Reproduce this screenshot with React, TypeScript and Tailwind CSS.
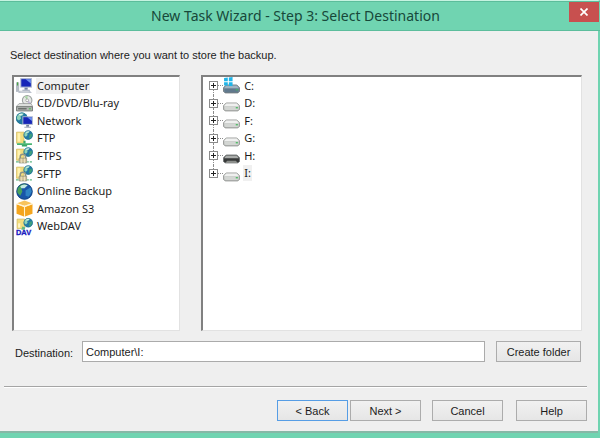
import { useState } from "react";
import type { ReactNode } from "react";

const ICON = "block h-[17px] w-[17px] shrink-0";

function Globe({ x, y, r }: { x: number; y: number; r: number }) {
  const k = r / 8;
  return (
    <g transform={`translate(${x} ${y}) scale(${k})`}>
      <circle r="8" fill="#2379a6" />
      <path d="M-7 -3C-5 -7 0 -8 3 -7L1 -4L-2 -3L-1 0L-4 3L-7 1Z" fill="#8fd3b8" />
      <path d="M2 -1L6 -3L7 1L4 6L1 5L2 2Z" fill="#3f9f7c" />
      <path d="M-5 -5C-3 -7 1 -7 2 -6L-2 -4Z" fill="#dff4f4" />
      <circle r="7.5" fill="none" stroke="#23788c" strokeWidth="1" />
    </g>
  );
}

function Monitor({ x, y }: { x: number; y: number }) {
  return (
    <g transform={`translate(${x} ${y})`}>
      <path d="M0 0H11V9H0Z" fill="#a9b4cf" />
      <path d="M1 1H10V8H1Z" fill="#1726b8" />
      <path d="M5 1H10V5Z" fill="#6f93ef" />
      <path d="M4 9H7V11H4Z" fill="#7480a0" />
      <path d="M2 11H9V12H2Z" fill="#9aa3b8" />
    </g>
  );
}

function ComputerIcon() {
  return (
    <svg viewBox="0 0 16 16" className={ICON} aria-hidden="true">
      <path d="M0 5H3V14H0Z" fill="#b5bcc5" />
      <path d="M1 5H2V8H1Z" fill="#44a53c" />
      <Monitor x={4} y={1} />
      <path d="M3 13H13L15 15H2Z" fill="#bcc2cc" />
      <path d="M4 14H12" stroke="#e2e6ec" strokeWidth="0.7" />
    </svg>
  );
}

function DiscIcon() {
  return (
    <svg viewBox="0 0 16 16" className={ICON} aria-hidden="true">
      <circle cx="10.500" cy="5" r="4.500" fill="#e5e8e5" stroke="#9da2a0" />
      <path d="M10.500 5L8 1.500L11 1Z" fill="#a9d6a4" />
      <path d="M10.500 5L14 7L12 9Z" fill="#c5b9dc" />
      <circle cx="10.500" cy="5" r="1.300" fill="#fff" stroke="#888" strokeWidth="0.6" />
      <path d="M3 8H14L16 11H0Z" fill="#dcdedc" stroke="#8c908d" strokeWidth="0.6" />
      <path d="M0.500 11H15.500V15H0.500Z" fill="#b3b7b4" stroke="#6d716e" strokeWidth="0.8" />
      <path d="M2 13H10" stroke="#505451" />
      <path d="M12 13H14" stroke="#45b84a" />
    </svg>
  );
}

function NetworkIcon() {
  return (
    <svg viewBox="0 0 16 16" className={ICON} aria-hidden="true">
      <Globe x={5.5} y={6} r={5.5} />
      <g transform="translate(6 4) scale(0.9)">
        <Monitor x={0} y={0} />
      </g>
    </svg>
  );
}

function FolderGlobe({ children }: { children: ReactNode }) {
  return (
    <svg viewBox="0 0 16 16" className={ICON} aria-hidden="true">
      <path d="M0.500 2H7.500V12.500H0.500Z" fill="#f3dd7d" stroke="#d3ba62" strokeWidth="0.7" />
      <path d="M1.500 3H4V11H1.500Z" fill="#fff2b0" />
      <Globe x={11.5} y={4.8} r={4.3} />
      {children}
    </svg>
  );
}

function FtpIcon() {
  return (
    <FolderGlobe>
      <path d="M7 10H9V12.500H15V14H10.500V15.500H5.500V14H1V12.500H7Z" fill="#39a966" />
      <path d="M1 13H15" stroke="#8fe0a8" strokeWidth="0.5" />
    </FolderGlobe>
  );
}

function SecureFtpIcon() {
  return (
    <FolderGlobe>
      <path d="M4 11V9C4 6 9 6 9 9V11" fill="none" stroke="#8b9389" strokeWidth="1.400" />
      <path d="M3 10.500H10V15H3Z" fill="#d3c39a" stroke="#8a8e7a" strokeWidth="0.7" />
      <path d="M5 11V15M8 11V15" stroke="#efe6c4" strokeWidth="0.8" />
      <path d="M0 14H2.500M10.500 14H12M13 14H15" stroke="#5fb884" strokeWidth="1.400" />
    </FolderGlobe>
  );
}

function OnlineIcon() {
  return (
    <svg viewBox="0 0 16 16" className={ICON} aria-hidden="true">
      <circle cx="8" cy="8" r="7.500" fill="#1955a8" />
      <path d="M1 6C2 2 6 0 10 1L8 4L5 5L6 8L4 12L1 9Z" fill="#4aa35d" />
      <path d="M9 7L14 4L15 8L12 13L9 12Z" fill="#2f83c4" />
      <path d="M4 3C6 1 9 1 11 2L8 5L5 5Z" fill="#c3e9e2" />
      <circle cx="8" cy="8" r="7.300" fill="none" stroke="#174480" strokeWidth="0.8" />
    </svg>
  );
}

function AmazonIcon() {
  return (
    <svg viewBox="0 0 16 16" className={ICON} aria-hidden="true">
      <path d="M1 3L8 0.500L15 3L8 5.500Z" fill="#f8c35c" />
      <path d="M0.500 4L7.500 6.500V15.500L0.500 13Z" fill="#f4a51d" />
      <path d="M8.500 6.500L15.500 4V13L8.500 15.500Z" fill="#f4a51d" />
      <path d="M0.500 3.500L8 6L15.500 3.500M8 6V16" fill="none" stroke="#fff0c4" strokeWidth="0.8" />
    </svg>
  );
}

function WebDavIcon() {
  return (
    <svg viewBox="0 0 16 16" className={`${ICON} overflow-visible`} aria-hidden="true">
      <path d="M1 1H8V10H1Z" fill="#f3dd7d" stroke="#d3ba62" strokeWidth="0.7" />
      <path d="M2 5H4V9H2Z" fill="#fff6c8" />
      <Globe x={11.5} y={4.5} r={4.3} />
      <path d="M6 8L9 9L8 11H5Z" fill="#62b981" />
      <text x="0" y="16" fontSize="7" fontWeight="900" fill="#1a1ac0" stroke="#1a1ac0" strokeWidth="0.3" fontFamily="Liberation Sans, sans-serif">
        DAV
      </text>
    </svg>
  );
}

function DriveIcon({ kind }: { kind: string }) {
  return (
    <svg viewBox="0 0 16 16" className={ICON} aria-hidden="true">
      <path
        d="M3 7.500H13L15.500 10V13.500L14 15H2L0.500 13.500V10Z"
        fill={kind === "system" ? "#718b9d" : kind === "dark" ? "#373938" : "#c2c4c2"}
        stroke={kind === "light" ? "#858885" : "#63686b"}
        strokeWidth="0.7"
      />
      <path d="M3 8H13L15 10.500H1Z" fill={kind === "system" ? "#a0b4c1" : kind === "dark" ? "#a9acaa" : "#eff0ef"} />
      {kind === "dark" ? (
        <path d="M4 13H12L14 15H2Z" fill="#8c8f8c" />
      ) : (
        <path d="M1.500 11H14.500V13L13.500 14H2.500L1.500 13Z" fill={kind === "system" ? "#61798d" : "#d3d6d3"} />
      )}
      {kind !== "dark" && <path d="M12 12H14" stroke="#44b95d" strokeWidth="1.200" />}
      {kind === "system" && (
        <path d="M1 1L4.500 0.500V4H1ZM5.500 0.500L9 0V4H5.500ZM1 5H4.500V8H1ZM5.500 5H9V8.500H5.500Z" fill="#20b5e8" />
      )}
    </svg>
  );
}

const places = [
  { name: "Computer", icon: <ComputerIcon /> },
  { name: "CD/DVD/Blu-ray", icon: <DiscIcon /> },
  { name: "Network", icon: <NetworkIcon /> },
  { name: "FTP", icon: <FtpIcon /> },
  { name: "FTPS", icon: <SecureFtpIcon /> },
  { name: "SFTP", icon: <SecureFtpIcon /> },
  { name: "Online Backup", icon: <OnlineIcon /> },
  { name: "Amazon S3", icon: <AmazonIcon /> },
  { name: "WebDAV", icon: <WebDavIcon /> },
];

const drives = [
  { name: "C:", kind: "system" },
  { name: "D:", kind: "light" },
  { name: "F:", kind: "light" },
  { name: "G:", kind: "light" },
  { name: "H:", kind: "dark" },
  { name: "I:", kind: "light" },
];

const PANEL = "h-[256px] border-t-2 border-l-2 border-r border-b border-t-[#808080] border-l-[#808080] border-r-[#e2e2e2] border-b-[#e2e2e2] bg-white";
const TREE_TEXT = "font-['Noto_Sans','Open_Sans',sans-serif] text-[11px] leading-[16px] text-[#1c1c1c]";
const BUTTON = "h-[21px] shrink-0 border bg-linear-to-b from-[#f1f1f1] to-[#e6e6e6] text-center leading-[18px]";

export default function App() {
  const [place, setPlace] = useState("Computer");
  const [path, setPath] = useState("Computer\\I:");
  const selected = path.replace("Computer\\", "");

  return (
    <div className="border-t border-t-[#c5f3e1] border-r-2 border-b-[6px] border-r-[#70d4b1] border-b-[#70d4b1] bg-[#efefef] font-['Liberation_Sans',Arial,sans-serif] text-[11px] text-[#1c1c1c]">
      <header className="-mr-[2px] flex h-[30px] items-start border-t border-b border-t-[#5bbd9b] border-b-[#5cbd9c] bg-[#70d4b1]">
        <span className="w-[22px] shrink-0" />
        <h1 className="flex-1 pt-[4px] text-center font-['Noto_Sans','Open_Sans',sans-serif] text-[14px] leading-[20px] text-[#17483a]">
          New Task Wizard - Step 3: Select Destination
        </h1>
        <button type="button" aria-label="Close" className="mr-px flex h-[20px] w-[30px] shrink-0 items-center justify-center bg-[#c8504f]">
          <svg viewBox="0 0 8 8" className="h-[8px] w-[8px]" aria-hidden="true">
            <path d="M0.500 0.500L7.500 7.500M7.500 0.500L0.500 7.500" stroke="#fff" strokeWidth="1.700" />
          </svg>
        </button>
      </header>

      <main className="border-b-2 border-b-[#86b8a6]">
        <p className="pt-[16px] pl-[10px] leading-[16px]">Select destination where you want to store the backup.</p>

        <div className="mt-[12px] flex gap-[21px] pr-[16px] pl-[12px]">
          <div className={`${PANEL} min-w-0 flex-[167]`}>
            <ul className="grid h-[158px] auto-rows-fr">
              {places.map((p) => (
                <li key={p.name} className="flex min-h-0">
                  <button type="button" aria-pressed={p.name === place} onClick={() => setPlace(p.name)} className="flex items-center gap-[3px] pl-[2px]">
                    {p.icon}
                    <span className={`${TREE_TEXT} px-px ${p.name === place ? "bg-[#f0f0f0]" : ""}`}>{p.name}</span>
                  </button>
                </li>
              ))}
            </ul>
          </div>

          <div className={`${PANEL} min-w-0 flex-[382]`}>
            <ul className="grid h-[105px] auto-rows-fr">
              {drives.map((d, i) => (
                <li key={d.name} className="flex min-h-0 items-center pl-[6px]">
                  <span className="flex h-full w-[9px] flex-col items-center">
                    <span className={`flex-1 border-l border-dotted ${i === 0 ? "border-transparent" : "border-[#8c8c8c]"}`} />
                    <button type="button" aria-label={`Expand ${d.name}`} className="flex h-[9px] w-[9px] shrink-0 items-center justify-center border border-[#8b8b8b] bg-white">
                      <svg viewBox="0 0 5 5" className="h-[5px] w-[5px]" aria-hidden="true">
                        <path d="M0 2.500H5M2.500 0V5" stroke="#222" />
                      </svg>
                    </button>
                    <span className={`flex-1 border-l border-dotted ${i === drives.length - 1 ? "border-transparent" : "border-[#8c8c8c]"}`} />
                  </span>
                  <span className="w-[5px] border-t border-dotted border-[#8c8c8c]" />
                  <button type="button" onClick={() => setPath(`Computer\\${d.name}`)} className="flex items-center gap-[3px]">
                    <DriveIcon kind={d.kind} />
                    <span className={`${TREE_TEXT} px-px ${d.name === selected ? "bg-[#f0f0f0]" : ""}`}>{d.name}</span>
                  </button>
                </li>
              ))}
            </ul>
          </div>
        </div>

        <div className="mt-[10px] flex items-center pr-[17px] pl-[15px]">
          <label htmlFor="destination" className="w-[67px] shrink-0 pt-[3px] leading-[16px]">Destination:</label>
          <input
            id="destination"
            value={path}
            onChange={(e) => setPath(e.target.value)}
            className="h-[21px] min-w-0 flex-1 border border-[#ababab] bg-white px-[3px] outline-none"
          />
          <button type="button" className={`${BUTTON} ml-[11px] w-[85px] border-[#acacac]`}>Create folder</button>
        </div>

        <hr className="mt-[24px] mr-[11px] ml-[4px] h-[2px] border-t border-b border-t-[#a5a5a5] border-b-white" />

        <div className="mt-[12px] flex justify-end pr-[11px] pb-[10px]">
          <button type="button" className={`${BUTTON} w-[71px] border-[#569de5]`}>&lt; Back</button>
          <button type="button" className={`${BUTTON} ml-[2px] w-[71px] border-[#acacac]`}>Next &gt;</button>
          <button type="button" className={`${BUTTON} ml-[11px] w-[71px] border-[#acacac]`}>Cancel</button>
          <button type="button" className={`${BUTTON} ml-[13px] w-[71px] border-[#acacac]`}>Help</button>
        </div>
      </main>
    </div>
  );
}
